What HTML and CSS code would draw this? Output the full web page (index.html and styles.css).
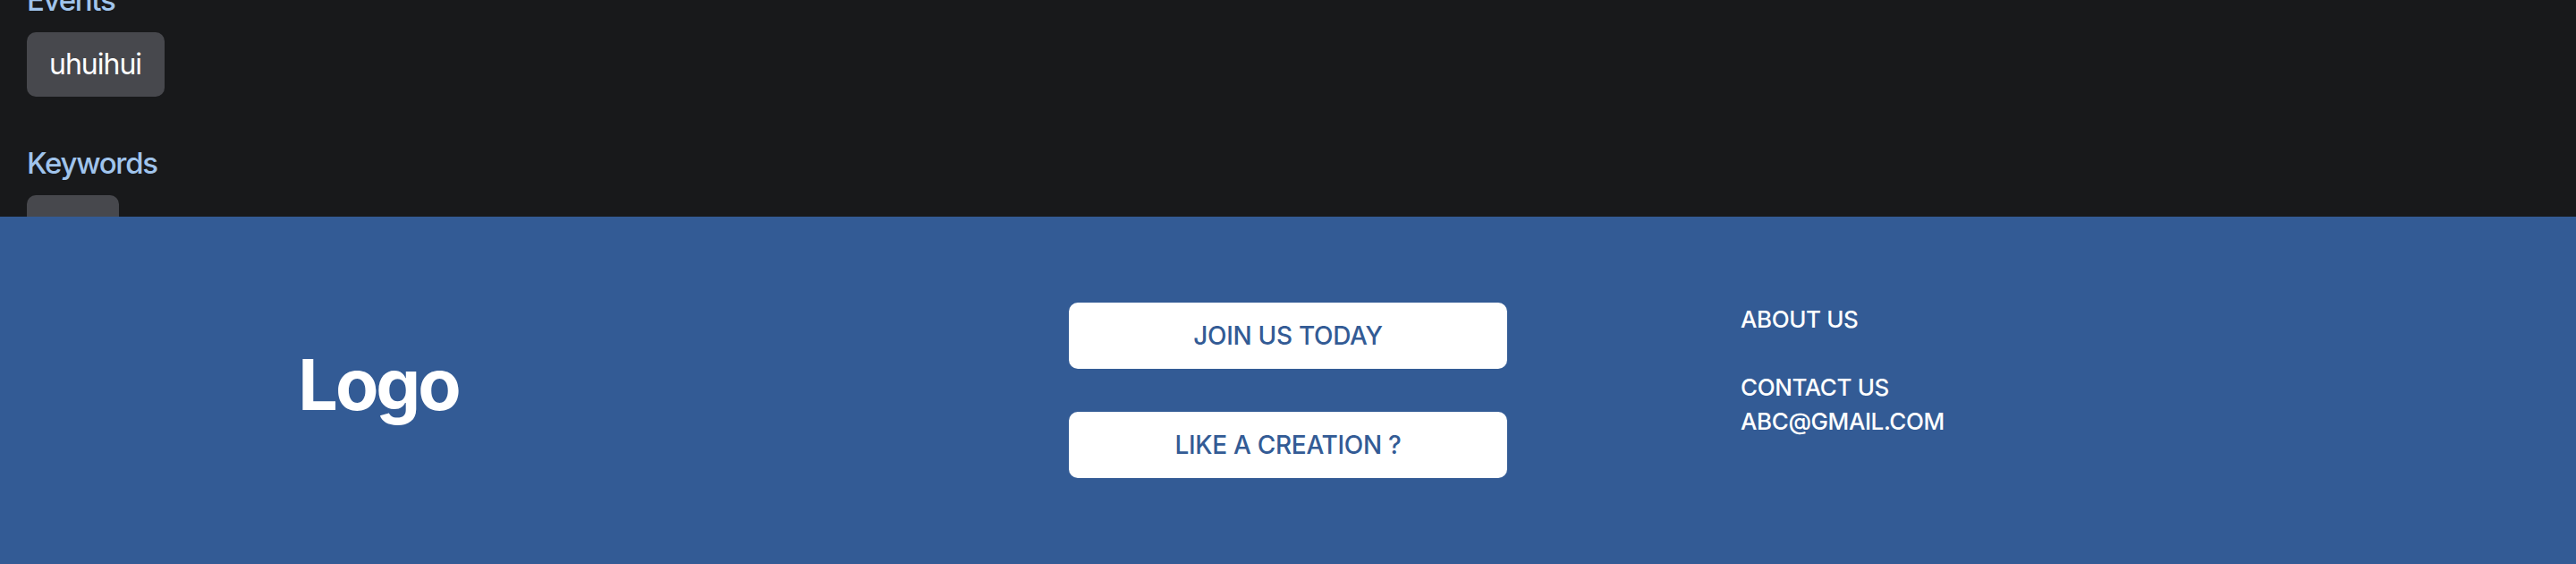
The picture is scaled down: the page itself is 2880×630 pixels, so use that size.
FILE: index.html
```html
<!DOCTYPE html>
<html lang="en">
<head>
<meta charset="utf-8">
<title>Page</title>
<link rel="stylesheet" href="styles.css">
</head>
<body>
<main class="content">
  <section class="group">
    <h3 class="label label-first">Events</h3>
    <div class="chips"><span class="chip">uhuihui</span></div>
  </section>
  <section class="group">
    <h3 class="label">Keywords</h3>
    <div class="chips"><span class="chip">test</span></div>
  </section>
</main>
<footer class="footer">
  <div class="footer-logo"><span class="logo">Logo</span></div>
  <div class="footer-actions">
    <a class="btn" href="#">JOIN US TODAY</a>
    <a class="btn" href="#">LIKE A CREATION ?</a>
  </div>
  <div class="footer-links">
    <a class="link" href="#">ABOUT US</a>
    <span class="spacer"></span>
    <a class="link" href="#">CONTACT US</a>
    <a class="link" href="#">ABC@GMAIL.COM</a>
  </div>
</footer>
</body>
</html>
```

FILE: styles.css
```css
* { box-sizing: border-box; }
html, body { margin: 0; padding: 0; }
body {
  background: #18191b;
  font-family: Inter, "Liberation Sans", sans-serif;
  color: #fff;
  height: 630px;
  overflow: hidden;
}
.content {
  height: 242px;
  overflow: hidden;
  padding: 0 30px;
}
.group { margin-bottom: 54px; }
.label {
  margin: 0 0 16px;
  font-size: 33px;
  line-height: 40px;
  font-weight: 500;
  letter-spacing: -1.3px;
  color: #a0c4ec;
}
.label-first { margin-top: -20px; }
.chips { display: flex; gap: 12px; }
.chip {
  display: inline-block;
  background: #47484d;
  border-radius: 10px;
  padding: 16px 26px 16px 25px;
  font-size: 32px;
  line-height: 40px;
  letter-spacing: -1px;
  color: #fff;
}
.footer {
  display: grid;
  grid-template-columns: 1fr 490px 1fr;
  column-gap: 261px;
  align-items: start;
  background: #335b95;
  padding: 96px 0;
  min-height: 388px;
}
.footer-logo {
  align-self: center;
  display: flex;
  justify-content: center;
  padding-right: 88px;
  margin-bottom: 14px;
}
.logo {
  font-size: 79px;
  font-weight: 700;
  line-height: 97px;
  letter-spacing: -3px;
  color: #fff;
}
.footer-actions {
  display: flex;
  flex-direction: column;
  gap: 48px;
}
.btn {
  display: flex;
  align-items: center;
  justify-content: center;
  height: 74px;
  background: #fff;
  border-radius: 10px;
  color: #335b95;
  font-size: 28px;
  font-weight: 500;
  letter-spacing: -0.3px;
  text-decoration: none;
}
.footer-links {
  display: flex;
  flex-direction: column;
  align-items: flex-start;
}
.link {
  color: #fff;
  text-decoration: none;
  font-size: 26px;
  font-weight: 500;
  line-height: 38px;
  letter-spacing: -0.4px;
}
.spacer { height: 38px; }
```
